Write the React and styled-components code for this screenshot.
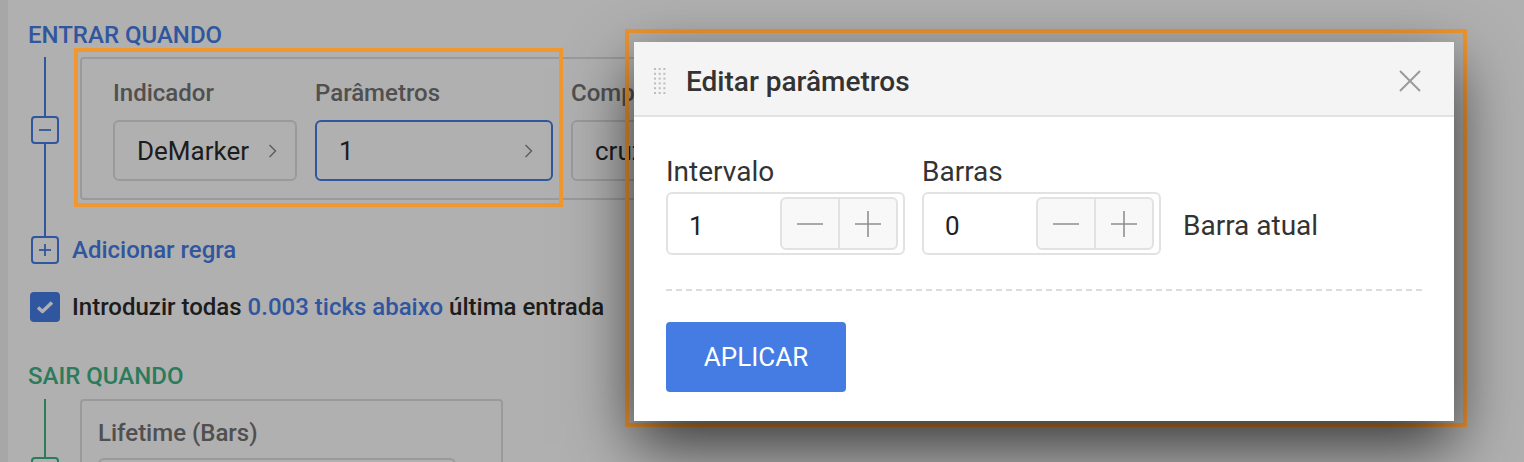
import React from 'react';
import styled, { createGlobalStyle } from 'styled-components';

const colors = {
  blue: '#467de6',
  green: '#41b384',
  text: '#2b2b2b',
  label: '#747474',
  border: '#dfdfdf',
  orange: '#f2962f',
};

const GlobalStyle = createGlobalStyle`
  html, body {
    margin: 0;
    padding: 0;
    background: #fff;
    font-family: Roboto, "Noto Sans", Arial, sans-serif;
    overflow: hidden;
  }
`;

const Page = styled.div`
  position: relative;
  width: 1524px;
  height: 462px;
  overflow: hidden;
  display: flex;
  background: #fff;
`;

const Sidebar = styled.div`
  width: 8px;
  flex: none;
  background: #f2f2f2;
`;

const Content = styled.div`
  flex: 1;
  padding: 23px 0 0 20px;
`;

const SectionTitle = styled.div`
  font-size: 24px;
  line-height: 24px;
  font-weight: 500;
  color: ${p => p.$color};
  margin-top: ${p => p.$top || 0}px;
`;

const RuleRow = styled.div`
  display: flex;
  align-items: stretch;
  margin-top: ${p => p.$top}px;
`;

const Rail = styled.div`
  width: 28px;
  margin: 0 21px 0 3px;
  display: flex;
  flex-direction: column;
  align-items: center;
  color: ${p => p.$color};
`;

const RailLine = styled.div`
  width: 2px;
  background: currentColor;
  flex: ${p => (p.$h ? `0 0 ${p.$h}px` : '1')};
`;

const RailBox = styled.div`
  width: 28px;
  height: 28px;
  box-sizing: border-box;
  flex: none;
  border: 2px solid currentColor;
  border-radius: 4px;
  background: #fff;
  display: flex;
  align-items: center;
  justify-content: center;
`;

const Card = styled.div`
  box-sizing: border-box;
  width: ${p => p.$w}px;
  border: 2px solid ${colors.border};
  border-radius: 4px;
  padding: ${p => p.$pad};
  margin-bottom: ${p => p.$bottom || 0}px;
  display: flex;
  gap: 18px;
  align-self: flex-start;
`;

const Field = styled.div`
  display: flex;
  flex-direction: column;
`;

const FieldLabel = styled.div`
  font-size: 24px;
  line-height: 24px;
  font-weight: 500;
  color: ${colors.label};
  margin-bottom: ${p => p.$gap || 15}px;
`;

const Select = styled.div`
  box-sizing: border-box;
  width: ${p => p.$w}px;
  height: 61px;
  border: 2px solid ${p => (p.$active ? colors.blue : colors.border)};
  border-radius: 6px;
  padding: 0 18px 0 22px;
  display: flex;
  align-items: center;
  justify-content: space-between;
  font-size: 26px;
  color: ${colors.text};
`;

const AddRow = styled.div`
  display: flex;
  align-items: center;
  padding-left: 3px;
  color: ${colors.blue};
`;

const AddLink = styled.span`
  margin-left: 13px;
  font-size: 24px;
  font-weight: 500;
  line-height: 28px;
`;

const CheckRow = styled.div`
  display: flex;
  align-items: center;
  margin-top: 28px;
  padding-left: 2px;
`;

const CheckBox = styled.div`
  width: 30px;
  height: 30px;
  border-radius: 4px;
  background: ${colors.blue};
  display: flex;
  align-items: center;
  justify-content: center;
`;

const CheckText = styled.span`
  margin-left: 12px;
  font-size: 24px;
  font-weight: 500;
  color: ${colors.text};
`;

const Accent = styled.span`
  color: ${colors.blue};
`;

const Dim = styled.div`
  position: absolute;
  inset: 0;
  background: rgba(0, 0, 0, 0.31);
`;

const Highlight = styled.div`
  position: absolute;
  left: 74px;
  top: 48px;
  width: 489px;
  height: 159px;
  box-sizing: border-box;
  border: 4px solid ${colors.orange};
`;

const ModalFrame = styled.div`
  position: absolute;
  left: 625px;
  top: 29px;
  border: 4px solid ${colors.orange};
  padding: 9px 9px 2px 5px;
`;

const Modal = styled.div`
  width: 820px;
  height: 379px;
  background: #fff;
  box-shadow: 0 24px 60px rgba(0, 0, 0, 0.7);
  display: flex;
  flex-direction: column;
`;

const ModalHeader = styled.div`
  flex: none;
  box-sizing: border-box;
  height: 75px;
  background: #f4f4f4;
  border-bottom: 2px solid #e2e2e2;
  display: flex;
  align-items: center;
  padding: 4px 32px 0 20px;
`;

const ModalTitle = styled.div`
  flex: 1;
  margin-left: 20px;
  padding-top: 2px;
  font-size: 28px;
  font-weight: 500;
  color: #333;
`;

const ModalBody = styled.div`
  padding: 38px 32px 0 32px;
`;

const ParamRow = styled.div`
  display: flex;
  align-items: flex-end;
  gap: 17px;
`;

const ParamLabel = styled.div`
  font-size: 28px;
  line-height: 34px;
  color: #333;
  margin-bottom: 3px;
`;

const NumberBox = styled.div`
  box-sizing: border-box;
  width: 239px;
  height: 63px;
  border: 2px solid #e2e2e2;
  border-radius: 6px;
  padding: 0 5px 0 21px;
  display: flex;
  align-items: center;
  justify-content: space-between;
  font-size: 26px;
  color: #222;
`;

const Value = styled.span`
  padding-top: 4px;
`;

const Stepper = styled.div`
  display: flex;
  height: 53px;
  box-sizing: border-box;
  border: 2px solid #e2e2e2;
  border-radius: 6px;
  background: #f8f8f8;
  overflow: hidden;
`;

const StepButton = styled.div`
  width: 56px;
  display: flex;
  align-items: center;
  justify-content: center;
  & + & {
    border-left: 2px solid #e2e2e2;
  }
`;

const Suffix = styled.div`
  margin-left: 5px;
  height: 63px;
  box-sizing: border-box;
  padding-top: 4px;
  line-height: 59px;
  font-size: 28px;
  color: #333;
`;

const Divider = styled.div`
  margin-top: 34px;
  border-top: 2px dashed #dcdcdc;
`;

const ApplyButton = styled.button`
  margin-top: 31px;
  width: 180px;
  height: 70px;
  border: none;
  border-radius: 4px;
  background: #457ce4;
  color: #fff;
  font-family: inherit;
  font-size: 26px;
  font-weight: 400;
  padding: 0;
`;

const Chevron = () => (
  <svg width="9" height="16" viewBox="0 0 9 16">
    <polyline points="1.5,2 7.5,8 1.5,14" fill="none" stroke="#8a8a8a" strokeWidth="1.5" />
  </svg>
);

const MinusIcon = () => (
  <svg width="14" height="14" viewBox="0 0 14 14">
    <line x1="1" y1="7" x2="13" y2="7" stroke="currentColor" strokeWidth="1.8" />
  </svg>
);

const PlusIcon = () => (
  <svg width="14" height="14" viewBox="0 0 14 14">
    <line x1="1" y1="7" x2="13" y2="7" stroke="currentColor" strokeWidth="1.8" />
    <line x1="7" y1="1" x2="7" y2="13" stroke="currentColor" strokeWidth="1.8" />
  </svg>
);

const StepMinus = () => (
  <svg width="28" height="28" viewBox="0 0 28 28">
    <line x1="1" y1="14" x2="27" y2="14" stroke="#8f8f8f" strokeWidth="1.6" />
  </svg>
);

const StepPlus = () => (
  <svg width="28" height="28" viewBox="0 0 28 28">
    <line x1="1" y1="14" x2="27" y2="14" stroke="#8f8f8f" strokeWidth="1.6" />
    <line x1="14" y1="1" x2="14" y2="27" stroke="#8f8f8f" strokeWidth="1.6" />
  </svg>
);

const DragHandle = () => (
  <svg width="12" height="26" viewBox="0 0 12 26">
    {[0, 1, 2, 3, 4, 5].map(r =>
      [0, 1, 2].map(c => (
        <rect key={`${r}-${c}`} x={c * 4.7} y={r * 4.8} width="2" height="2" fill="#bdbdbd" />
      ))
    )}
  </svg>
);

const CloseIcon = () => (
  <svg width="24" height="24" viewBox="0 0 24 24">
    <path d="M2 2 L22 22 M22 2 L2 22" stroke="#9a9a9a" strokeWidth="2" fill="none" />
  </svg>
);

const CheckMark = () => (
  <svg width="18" height="14" viewBox="0 0 18 14">
    <polyline points="2,7.5 6.5,11.5 16,2.5" fill="none" stroke="#fff" strokeWidth="3.5" strokeLinejoin="round" />
  </svg>
);

const NumberField = ({ label, value }) => (
  <div>
    <ParamLabel>{label}</ParamLabel>
    <NumberBox>
      <Value>{value}</Value>
      <Stepper>
        <StepButton>
          <StepMinus />
        </StepButton>
        <StepButton>
          <StepPlus />
        </StepButton>
      </Stepper>
    </NumberBox>
  </div>
);

const App = () => (
  <Page>
    <GlobalStyle />
    <Sidebar />
    <Content>
      <SectionTitle $color={colors.blue}>ENTRAR QUANDO</SectionTitle>
      <RuleRow $top={10}>
        <Rail $color={colors.blue}>
          <RailLine $h={59} />
          <RailBox>
            <MinusIcon />
          </RailBox>
          <RailLine />
        </Rail>
        <Card $w={900} $pad="22px 0 17px 31px" $bottom={36}>
          <Field>
            <FieldLabel>Indicador</FieldLabel>
            <Select $w={184}>
              DeMarker
              <Chevron />
            </Select>
          </Field>
          <Field>
            <FieldLabel>Parâmetros</FieldLabel>
            <Select $w={238} $active>
              1
              <Chevron />
            </Select>
          </Field>
          <Field>
            <FieldLabel>Comparação</FieldLabel>
            <Select $w={260}>
              cruza acima
              <Chevron />
            </Select>
          </Field>
        </Card>
      </RuleRow>
      <AddRow>
        <RailBox>
          <PlusIcon />
        </RailBox>
        <AddLink>Adicionar regra</AddLink>
      </AddRow>
      <CheckRow>
        <CheckBox>
          <CheckMark />
        </CheckBox>
        <CheckText>
          Introduzir todas <Accent>0.003 ticks abaixo</Accent> última entrada
        </CheckText>
      </CheckRow>

      <SectionTitle $color={colors.green} $top={42}>
        SAIR QUANDO
      </SectionTitle>
      <RuleRow $top={11}>
        <Rail $color={colors.green}>
          <RailLine $h={58} />
          <RailBox>
            <MinusIcon />
          </RailBox>
          <RailLine />
        </Rail>
        <Card $w={423} $pad="20px 0 20px 16px">
          <Field>
            <FieldLabel $gap={13}>Lifetime (Bars)</FieldLabel>
            <Select $w={358} />
          </Field>
        </Card>
      </RuleRow>
    </Content>

    <Dim />
    <Highlight />

    <ModalFrame>
      <Modal>
        <ModalHeader>
          <DragHandle />
          <ModalTitle>Editar parâmetros</ModalTitle>
          <CloseIcon />
        </ModalHeader>
        <ModalBody>
          <ParamRow>
            <NumberField label="Intervalo" value="1" />
            <NumberField label="Barras" value="0" />
            <Suffix>Barra atual</Suffix>
          </ParamRow>
          <Divider />
          <ApplyButton>APLICAR</ApplyButton>
        </ModalBody>
      </Modal>
    </ModalFrame>
  </Page>
);

export default App;
